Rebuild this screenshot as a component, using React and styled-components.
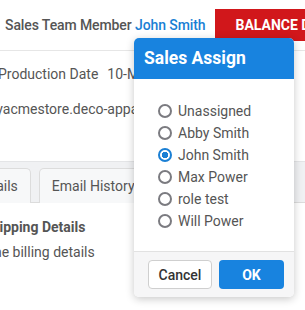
import React, { useState } from 'react'
import styled, { createGlobalStyle } from 'styled-components';

const users = ['Unassigned', 'Abby Smith', 'John Smith', 'Max Power', 'role test', 'Will Power'];

export default function App() {
  const [picked, setPicked] = useState('John Smith');

  return (
    <>
      <GlobalStyle />
      <Page>
        <TopBar>
          <Member>Sales Team Member <Name>John Smith</Name></Member>
          <BalanceButton>BALANCE DUE</BalanceButton>
        </TopBar>
        <Info>
          <InfoRow shift={-2}>
            <span>Production Date</span>
            <Value>10-May-2024</Value>
          </InfoRow>
          <InfoRow shift={-16}>myacmestore.deco-apparel.com</InfoRow>
        </Info>
        <TabBar>
          <Tab shift={-38}>Details</Tab>
          <Tab>Email History</Tab>
        </TabBar>
        <Shipping>
          <ShipTitle shift={-17}>Shipping Details</ShipTitle>
          <ShipText shift={-68}>Same as the billing details</ShipText>
        </Shipping>

        <Popover>
          <PopHeader>Sales Assign</PopHeader>
          <PopBody>
            {users.map(u => (
              <Option key={u}>
                <Radio
                  type="radio"
                  name="sales"
                  checked={picked === u}
                  onChange={() => setPicked(u)}
                />
                {u}
              </Option>
            ))}
          </PopBody>
          <PopFooter>
            <CancelButton>Cancel</CancelButton>
            <OkButton>OK</OkButton>
          </PopFooter>
        </Popover>
      </Page>
    </>
  )
}

const GlobalStyle = createGlobalStyle`
  body {
    margin: 0;
    font-family: Roboto, "Liberation Sans", sans-serif;
    background: #fff;
    overflow: hidden;
  }
`;

const Page = styled.div`
  position: relative;
  width: 305px;
  height: 310px;
  overflow: hidden;
  color: #555;
  font-size: 14px;
`;

const TopBar = styled.div`
  display: flex;
  align-items: center;
  height: 51px;
  box-sizing: border-box;
  padding: 6px 0 7px 5px;
  border-bottom: 1px solid #e6e6e6;
  white-space: nowrap;
`;

const Member = styled.div`
  font-weight: 500;
  color: #555;
  font-size: 14px;
  letter-spacing: -0.1px;
`;

const Name = styled.span`
  color: #1a7fd4;
`;

const BalanceButton = styled.button`
  flex: none;
  margin-left: 10px;
  height: 32px;
  padding: 0 20px;
  border: none;
  background: #d1171b;
  color: #fff;
  font-family: inherit;
  font-size: 14px;
  font-weight: 700;
  white-space: nowrap;
`;

const Info = styled.div`
  padding-top: 6px;
  margin-bottom: 34px;
`;

const InfoRow = styled.div`
  height: 35px;
  line-height: 35px;
  white-space: nowrap;
  margin-left: ${p => p.shift || 0}px;
`;

const Value = styled.span`
  margin-left: 9px;
`;

const TabBar = styled.div`
  display: flex;
  align-items: flex-end;
  gap: 8px;
  height: 42px;
  box-sizing: border-box;
  padding-top: 7px;
  background: #f0f1f3;
  border-top: 1px solid #e4e5e7;
  border-bottom: 1px solid #dcdcdc;
`;

const Tab = styled.div`
  flex: none;
  height: 34px;
  line-height: 34px;
  padding: 0 12px;
  margin-left: ${p => p.shift || 0}px;
  margin-bottom: -1px;
  background: #f7f8f9;
  border: 1px solid #dcdcdc;
  border-bottom: none;
  border-radius: 5px 5px 0 0;
  white-space: nowrap;
  color: #555;
`;

const Shipping = styled.div`
  padding-top: 12px;
  white-space: nowrap;
`;

const ShipTitle = styled.div`
  line-height: 25px;
  font-weight: 700;
  font-size: 14px;
  margin-left: ${p => p.shift || 0}px;
`;

const ShipText = styled.div`
  line-height: 25px;
  margin-left: ${p => p.shift || 0}px;
`;

const Popover = styled.div`
  position: absolute;
  left: 134px;
  top: 38px;
  width: 160px;
  background: #fff;
  border-radius: 5px;
  box-shadow: 0 2px 8px rgba(0, 0, 0, 0.22);
  overflow: hidden;
`;

const PopHeader = styled.div`
  height: 41px;
  line-height: 41px;
  padding-left: 10px;
  background: #1883df;
  color: #fff;
  font-size: 17.5px;
  font-weight: 700;
`;

const PopBody = styled.div`
  padding: 21px 0 19px 24px;
`;

const Option = styled.label`
  display: flex;
  align-items: center;
  gap: 6px;
  height: 22px;
  color: #555;
  font-size: 14px;
`;

const Radio = styled.input`
  appearance: none;
  margin: 0;
  width: 14px;
  height: 14px;
  border: 2px solid #7b7b80;
  border-radius: 50%;
  box-sizing: border-box;
  background: #fff;
  &:checked {
    border-color: #1a7fd4;
    background: radial-gradient(circle, #1a7fd4 0 3px, #fff 3.5px);
  }
`;

const PopFooter = styled.div`
  display: flex;
  gap: 7px;
  padding: 8px 10px 8px 14px;
  background: #f6f6f7;
  border-top: 1px solid #e2e2e2;
`;

const CancelButton = styled.button`
  width: 64px;
  height: 29px;
  border: 1px solid #cfcfcf;
  border-radius: 4px;
  background: #fff;
  color: #333;
  font-family: inherit;
  font-size: 14px;
  font-weight: 500;
`;

const OkButton = styled.button`
  width: 65px;
  height: 29px;
  border: none;
  border-radius: 4px;
  background: #1883df;
  color: #fff;
  font-family: inherit;
  font-size: 14px;
  font-weight: 700;
`;
